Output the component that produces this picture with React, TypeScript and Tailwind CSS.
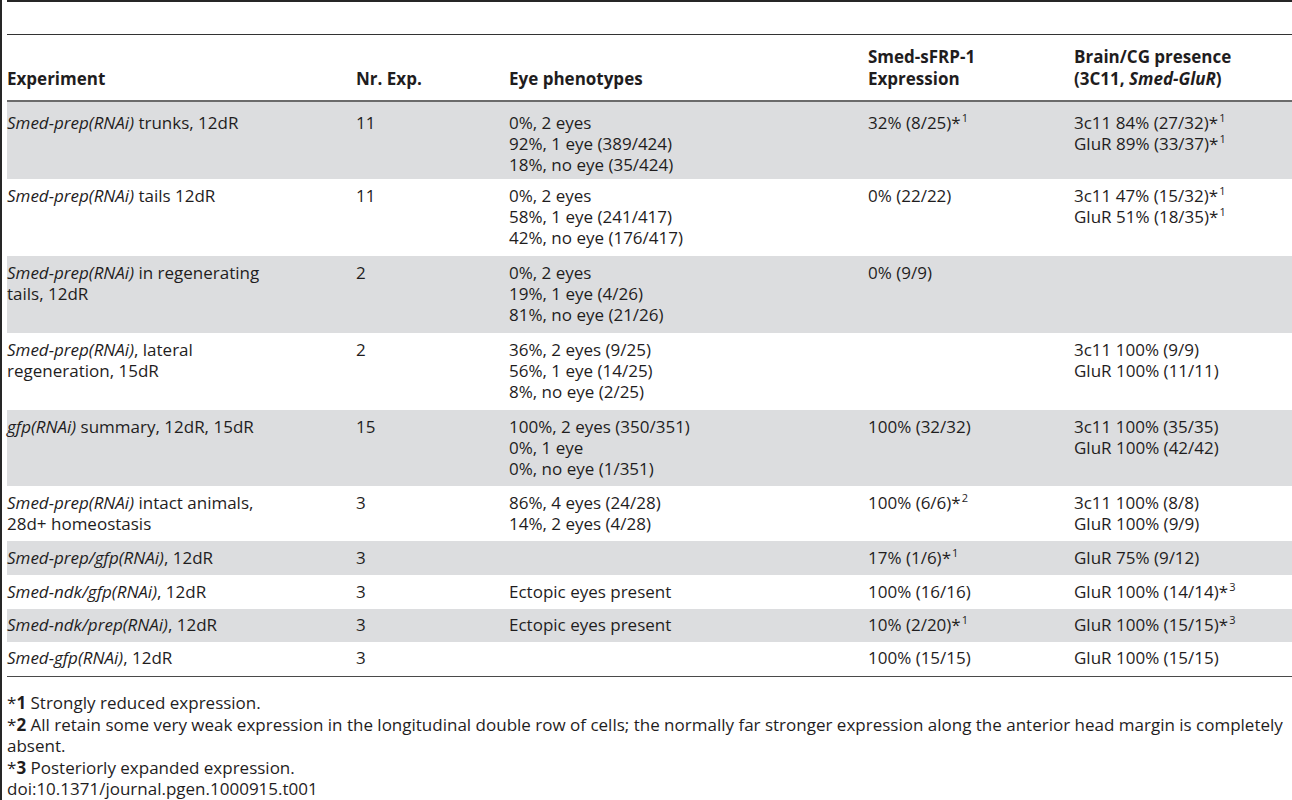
import React from "react";

type Row = {
  exp: React.ReactNode;
  n: string;
  eyes: React.ReactNode;
  sfrp: React.ReactNode;
  brain: React.ReactNode;
  h: string;
  pt: string;
};

const Sup = ({ n }: { n: string }) => (
  <>
    *<sup className="text-[11px] relative -top-[7px] ml-[1px]">{n}</sup>
  </>
);

const rows: Row[] = [
  {
    exp: (
      <>
        <i>Smed-prep(RNAi)</i> trunks, 12dR
      </>
    ),
    n: "11",
    eyes: (
      <>
        0%, 2 eyes
        <br />
        92%, 1 eye (389/424)
        <br />
        18%, no eye (35/424)
      </>
    ),
    sfrp: (
      <>
        32% (8/25)
        <Sup n="1" />
      </>
    ),
    brain: (
      <>
        3c11 84% (27/32)
        <Sup n="1" />
        <br />
        GluR 89% (33/37)
        <Sup n="1" />
      </>
    ),
    h: "h-[77px]",
    pt: "pt-[10px]",
  },
  {
    exp: (
      <>
        <i>Smed-prep(RNAi)</i> tails 12dR
      </>
    ),
    n: "11",
    eyes: (
      <>
        0%, 2 eyes
        <br />
        58%, 1 eye (241/417)
        <br />
        42%, no eye (176/417)
      </>
    ),
    sfrp: "0% (22/22)",
    brain: (
      <>
        3c11 47% (15/32)
        <Sup n="1" />
        <br />
        GluR 51% (18/35)
        <Sup n="1" />
      </>
    ),
    h: "h-[77px]",
    pt: "pt-[6px]",
  },
  {
    exp: (
      <>
        <i>Smed-prep(RNAi)</i> in regenerating
        <br />
        tails, 12dR
      </>
    ),
    n: "2",
    eyes: (
      <>
        0%, 2 eyes
        <br />
        19%, 1 eye (4/26)
        <br />
        81%, no eye (21/26)
      </>
    ),
    sfrp: "0% (9/9)",
    brain: "",
    h: "h-[77px]",
    pt: "pt-[6px]",
  },
  {
    exp: (
      <>
        <i>Smed-prep(RNAi)</i>, lateral
        <br />
        regeneration, 15dR
      </>
    ),
    n: "2",
    eyes: (
      <>
        36%, 2 eyes (9/25)
        <br />
        56%, 1 eye (14/25)
        <br />
        8%, no eye (2/25)
      </>
    ),
    sfrp: "",
    brain: (
      <>
        3c11 100% (9/9)
        <br />
        GluR 100% (11/11)
      </>
    ),
    h: "h-[77px]",
    pt: "pt-[6px]",
  },
  {
    exp: (
      <>
        <i>gfp(RNAi)</i> summary, 12dR, 15dR
      </>
    ),
    n: "15",
    eyes: (
      <>
        100%, 2 eyes (350/351)
        <br />
        0%, 1 eye
        <br />
        0%, no eye (1/351)
      </>
    ),
    sfrp: "100% (32/32)",
    brain: (
      <>
        3c11 100% (35/35)
        <br />
        GluR 100% (42/42)
      </>
    ),
    h: "h-[76px]",
    pt: "pt-[6px]",
  },
  {
    exp: (
      <>
        <i>Smed-prep(RNAi)</i> intact animals,
        <br />
        28d+ homeostasis
      </>
    ),
    n: "3",
    eyes: (
      <>
        86%, 4 eyes (24/28)
        <br />
        14%, 2 eyes (4/28)
      </>
    ),
    sfrp: (
      <>
        100% (6/6)
        <Sup n="2" />
      </>
    ),
    brain: (
      <>
        3c11 100% (8/8)
        <br />
        GluR 100% (9/9)
      </>
    ),
    h: "h-[55px]",
    pt: "pt-[6px]",
  },
  {
    exp: (
      <>
        <i>Smed-prep/gfp(RNAi)</i>, 12dR
      </>
    ),
    n: "3",
    eyes: "",
    sfrp: (
      <>
        17% (1/6)
        <Sup n="1" />
      </>
    ),
    brain: "GluR 75% (9/12)",
    h: "h-[34px]",
    pt: "pt-[6px]",
  },
  {
    exp: (
      <>
        <i>Smed-ndk/gfp(RNAi)</i>, 12dR
      </>
    ),
    n: "3",
    eyes: "Ectopic eyes present",
    sfrp: "100% (16/16)",
    brain: (
      <>
        GluR 100% (14/14)
        <Sup n="3" />
      </>
    ),
    h: "h-[34px]",
    pt: "pt-[6px]",
  },
  {
    exp: (
      <>
        <i>Smed-ndk/prep(RNAi)</i>, 12dR
      </>
    ),
    n: "3",
    eyes: "Ectopic eyes present",
    sfrp: (
      <>
        10% (2/20)
        <Sup n="1" />
      </>
    ),
    brain: (
      <>
        GluR 100% (15/15)
        <Sup n="3" />
      </>
    ),
    h: "h-[33px]",
    pt: "pt-[5px]",
  },
  {
    exp: (
      <>
        <i>Smed-gfp(RNAi)</i>, 12dR
      </>
    ),
    n: "3",
    eyes: "",
    sfrp: "100% (15/15)",
    brain: "GluR 100% (15/15)",
    h: "h-[34px]",
    pt: "pt-[5px]",
  },
];

const cols = "grid grid-cols-[349px_153px_359px_206px_1fr]";

export default function App() {
  return (
    <div
      className="w-[1292px] h-[800px] bg-white flex text-[#1f1d1e] overflow-hidden"
      style={{ fontFamily: '"Open Sans", "Noto Sans", sans-serif' }}
    >
      {/* left rule */}
      <div className="w-[2px] bg-[#262626] shrink-0" />
      <div className="ml-[5px] flex-1 flex flex-col">
        <div className="h-[2px] bg-[#262626]" />
        <div className="h-[32px]" />
        <div className="h-[1px] bg-[#333]" />

        {/* header */}
        <div className={`${cols} h-[65px] items-end pb-[10px] text-[17px] leading-[22px] font-bold`}>
          <div>Experiment</div>
          <div>Nr. Exp.</div>
          <div>Eye phenotypes</div>
          <div>
            Smed-sFRP-1
            <br />
            Expression
          </div>
          <div>
            Brain/CG presence
            <br />
            (3C11, <i>Smed-GluR</i>)
          </div>
        </div>
        <div className="h-[2px] bg-[#6b6b6b]" />

        {/* body */}
        <div className="text-[17px] leading-[21px]">
          {rows.map((r, i) => (
            <div
              key={i}
              className={`${cols} ${r.h} ${r.pt} ${i % 2 === 0 ? "bg-[#dcdddf]" : "bg-white"}`}
            >
              <div>{r.exp}</div>
              <div>{r.n}</div>
              <div>{r.eyes}</div>
              <div>{r.sfrp}</div>
              <div>{r.brain}</div>
            </div>
          ))}
        </div>
        <div className="h-[2px] bg-[#4a4a4a]" />

        {/* footnotes */}
        <div className="pt-[15px] text-[17px] leading-[21.5px]">
          <p>
            *<b>1</b> Strongly reduced expression.
          </p>
          <p>
            *<b>2</b> All retain some very weak expression in the longitudinal double row of cells; the normally far
            stronger expression along the anterior head margin is completely
            <br />
            absent.
          </p>
          <p>
            *<b>3</b> Posteriorly expanded expression.
          </p>
          <p>doi:10.1371/journal.pgen.1000915.t001</p>
        </div>
      </div>
    </div>
  );
}
